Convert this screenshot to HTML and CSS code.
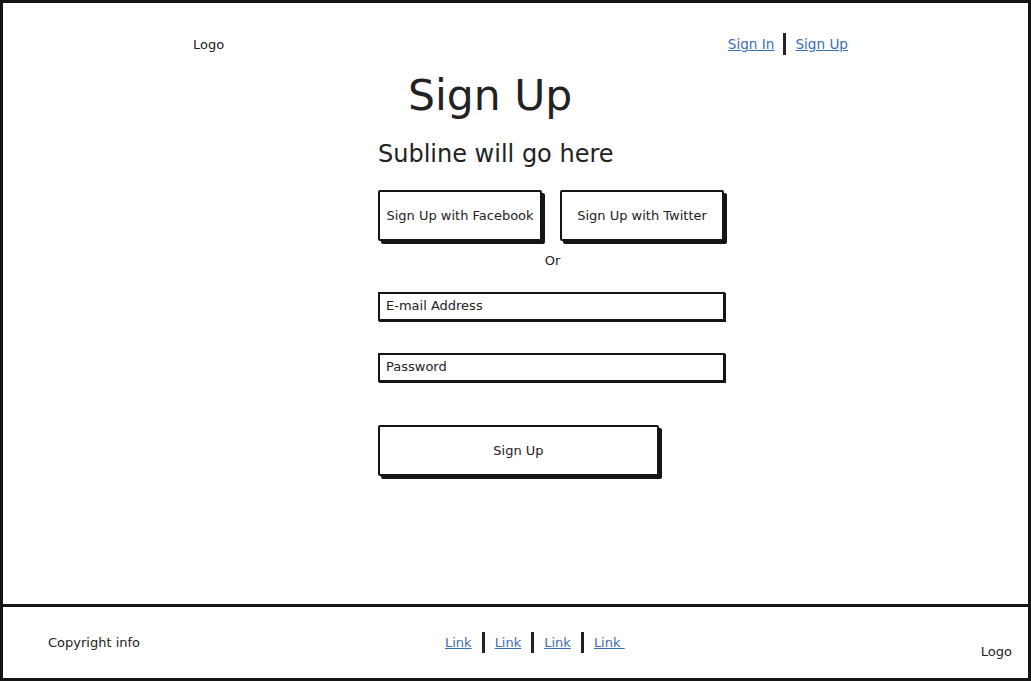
FILE: index.html
```html
<!DOCTYPE html>
<html>
<head>
<meta charset="utf-8">
<link rel="stylesheet" href="styles.css">
</head>
<body>
<div class="frame">
  <header class="top">
    <div class="logo">Logo</div>
    <nav class="nav">
      <a href="#">Sign In</a><span class="sep"></span><a href="#">Sign Up</a>
    </nav>
  </header>
  <main class="content">
    <h1 class="title">Sign Up</h1>
    <p class="subline">Subline will go here</p>
    <div class="social">
      <button class="btn social-btn">Sign Up with Facebook</button>
      <button class="btn social-btn">Sign Up with Twitter</button>
    </div>
    <div class="or">Or</div>
    <div class="field">E-mail Address</div>
    <div class="field">Password</div>
    <button class="btn submit">Sign Up</button>
  </main>
  <footer class="bottom">
    <div class="copy">Copyright info</div>
    <nav class="links">
      <a href="#">Link</a><span class="sep"></span><a href="#">Link</a><span class="sep"></span><a href="#">Link</a><span class="sep"></span><a href="#">Link&nbsp;</a>
    </nav>
    <div class="flogo">Logo</div>
  </footer>
</div>
</body>
</html>
```
FILE: styles.css
```css
* { box-sizing: border-box; }
html, body { margin: 0; padding: 0; background: #fff; }
body {
  font-family: "DejaVu Sans", "Liberation Sans", sans-serif;
  color: #222;
}
.frame {
  width: 1031px;
  height: 681px;
  border: 3px solid #151515;
  display: flex;
  flex-direction: column;
}
.top {
  display: flex;
  align-items: center;
  height: 82px;
  padding: 0 180px 0 190px;
  margin-bottom: -15px;
  flex: none;
}
.logo { font-size: 13px; }
.nav {
  margin-left: auto;
  display: flex;
  align-items: center;
  font-size: 13.6px;
}
a { color: #3d6db5; text-decoration: underline; }
.sep {
  display: inline-block;
  width: 3px;
  height: 22px;
  background: #222;
  margin: 0 9px;
}
.content {
  flex: 1;
  display: flex;
  flex-direction: column;
  align-items: flex-start;
  padding-left: 375px;
}
.title {
  margin: 0 0 0 30px;
  font-size: 42.5px;
  font-weight: normal;
  line-height: 52px;
}
.subline {
  margin: 17px 0 0 0;
  font-size: 24px;
  line-height: 30px;
}
.social {
  display: flex;
  gap: 18px;
  margin-top: 21px;
}
.btn {
  font-family: "DejaVu Sans", "Liberation Sans", sans-serif;
  color: #222;
  background: #fff;
  border: 2px solid #151515;
  box-shadow: 3px 3px 0 #151515;
  border-radius: 2px;
  padding: 0;
  cursor: pointer;
}
.social-btn {
  width: 164px;
  height: 51px;
  font-size: 13px;
}
.or {
  width: 347px;
  text-align: center;
  font-size: 13px;
  margin-top: 12px;
  padding-left: 2px;
}
.field {
  width: 347px;
  height: 29px;
  border: 2px solid #151515;
  box-shadow: 1px 1px 0 #151515;
  font-size: 13px;
  padding: 4px 6px;
  margin-top: 24px;
}
.field + .field { margin-top: 32px; }
.submit {
  width: 281px;
  height: 51px;
  font-size: 13px;
  margin-top: 43px;
}
.bottom {
  flex: none;
  height: 74px;
  border-top: 3px solid #151515;
  display: flex;
  align-items: center;
  padding: 0 16px 0 45px;
  font-size: 13px;
}
.copy { width: 397px; }
.links { display: flex; align-items: center; }
.links .sep { margin: 0 10px; height: 21px; }
.flogo { margin-left: auto; padding-top: 17px; font-size: 13px; }
```
